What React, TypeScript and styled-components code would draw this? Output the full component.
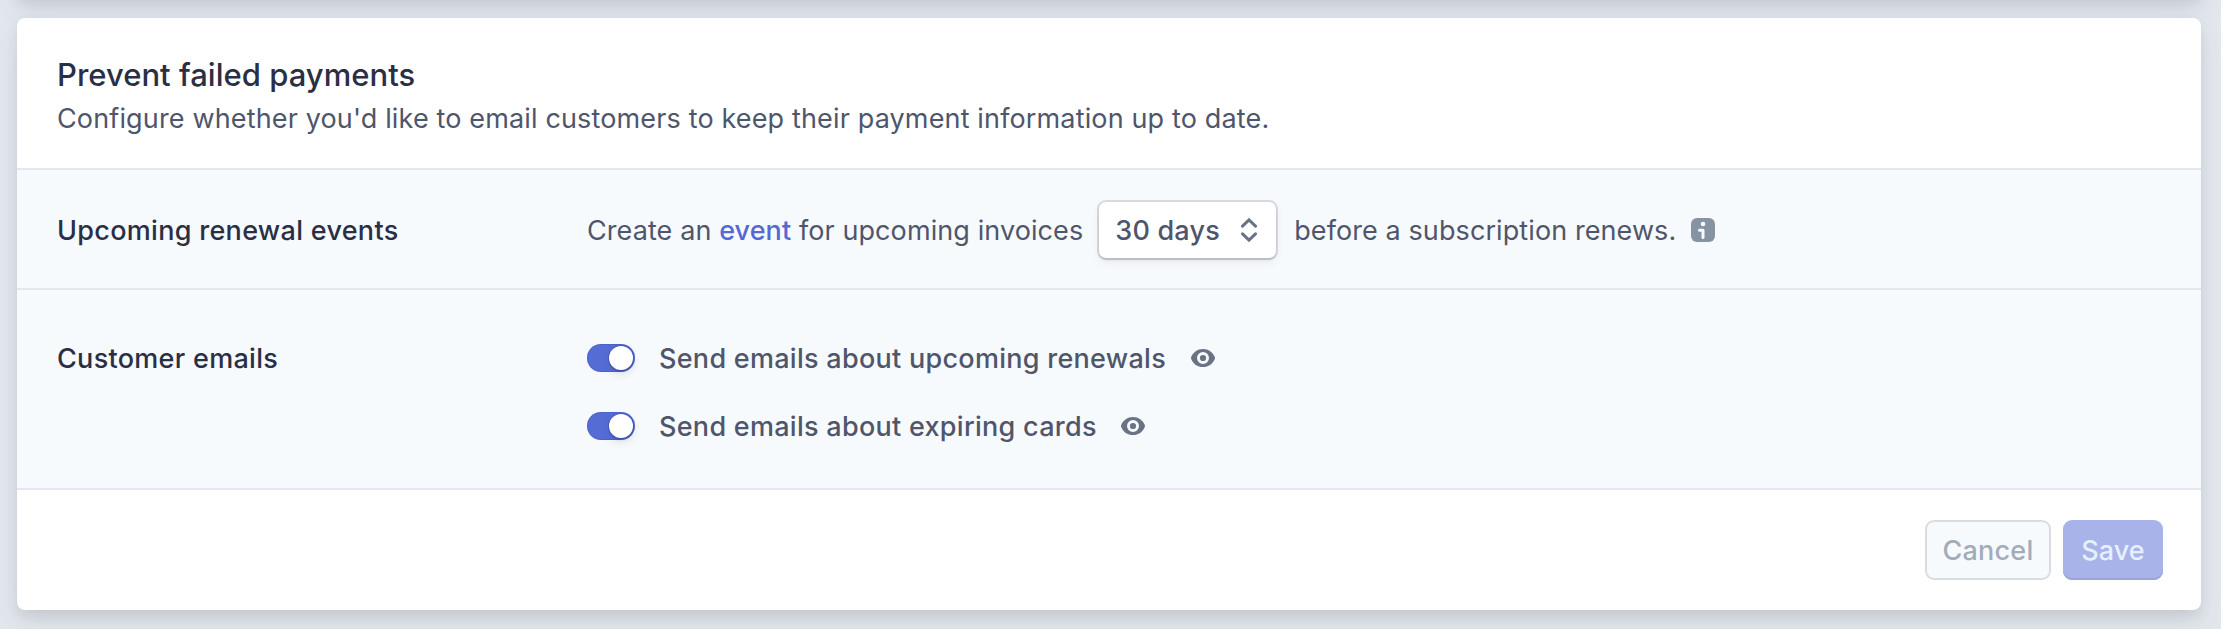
import React, { useState } from "react";
import styled, { createGlobalStyle } from "styled-components";

const GlobalStyle = createGlobalStyle`
  *, *::before, *::after { box-sizing: border-box; }
  body {
    margin: 0;
    background: #e3e8ee;
    color: #4f566b;
    font-family: Inter, "Liberation Sans", sans-serif;
    font-size: 27px;
    line-height: 40px;
  }
`;

const Page = styled.main`
  display: flex;
  flex-direction: column;
  gap: 20px;
  height: 629px;
  padding: 0 20px 0 17px;
  overflow: hidden;
`;

const Card = styled.section`
  flex: none;
  position: relative;
  border-radius: 8px;
  background: #fff;
  box-shadow: 0 14px 28px rgba(60, 66, 87, 0.1), 0 6px 12px rgba(0, 0, 0, 0.07);
`;

const PreviousCard = styled(Card)`
  height: 120px;
  margin-top: -122px;
`;

const Header = styled.header`
  height: 152px;
  padding: 37px 40px 0;
  border-bottom: 2px solid #e3e8ee;
`;

const Title = styled.h2`
  margin: 0 0 4px;
  color: #2a2f45;
  font-size: 31px;
  font-weight: 500;
  line-height: 40px;
  letter-spacing: 0.02px;
`;

const Description = styled.p`
  margin: 0;
  letter-spacing: 0.145px;
`;

const Row = styled.div<{ $pad: string }>`
  display: grid;
  grid-template-columns: 530px 1fr;
  padding: ${(p) => p.$pad};
  border-bottom: 2px solid #e3e8ee;
  background: #f7fafc;
`;

const Label = styled.h3`
  margin: 0;
  padding-top: 1px;
  color: #2a2f45;
  font-size: 27px;
  font-weight: 500;
  line-height: inherit;
  letter-spacing: 0.3px;
`;

const EventRow = styled(Row)`
  align-items: center;

  ${Label} {
    padding-top: 2px;
  }
`;

const Sentence = styled.div`
  display: flex;
  align-items: center;
  letter-spacing: 0.09px;
`;

const Phrase = styled.span`
  padding-top: 2px;
`;

const EventLink = styled.a`
  color: #5469d4;
  font-weight: 500;
  text-decoration: none;
`;

const SelectButton = styled.button`
  display: flex;
  align-items: center;
  justify-content: space-between;
  width: 177px;
  height: 56px;
  margin: 2px 18px 2px 16px;
  padding: 0 18px 0 16px;
  border: 0;
  border-radius: 7px;
  background: #fff;
  color: #4f566b;
  font: inherit;
  font-weight: 500;
  letter-spacing: 0.2px;
  box-shadow: 0 0 0 2px rgba(60, 66, 87, 0.16), 0 2px 2px rgba(0, 0, 0, 0.12),
    0 4px 10px rgba(60, 66, 87, 0.08);
`;

const InfoIcon = styled.svg`
  flex: none;
  margin-left: 15px;
`;

const Options = styled.div`
  display: flex;
  flex-direction: column;
  gap: 28px;
`;

const Option = styled.div`
  display: flex;
  align-items: center;
  height: 40px;
`;

const OptionLabel = styled.span`
  margin: 0 24.6px 0 24px;
  padding-top: 2px;
  font-weight: 500;
  letter-spacing: 0.28px;
`;

const Switch = styled.button<{ $on: boolean }>`
  display: flex;
  align-items: center;
  justify-content: ${(p) => (p.$on ? "flex-end" : "flex-start")};
  width: 48px;
  height: 28px;
  padding: 0 2px;
  border: 0;
  border-radius: 14px;
  background: ${(p) => (p.$on ? "#556cd6" : "#c1c9d2")};
  box-shadow: inset 0 0 0 1px rgba(50, 60, 150, 0.18);
`;

const Knob = styled.span`
  width: 24px;
  height: 24px;
  border-radius: 50%;
  background: #fff;
  box-shadow: 0 0 0 1px rgba(0, 0, 90, 0.14), 0 2px 2px rgba(0, 0, 0, 0.12),
    0 4px 10px rgba(60, 66, 87, 0.14);
`;

const Footer = styled.footer`
  display: flex;
  justify-content: flex-end;
  gap: 12px;
  height: 120px;
  padding: 30px 38px;
`;

const Button = styled.button<{ $primary?: boolean }>`
  width: ${(p) => (p.$primary ? 100 : 126)}px;
  height: 60px;
  padding: 2px 0 0;
  border: ${(p) => (p.$primary ? "0" : "2px solid #d9dce1")};
  border-radius: 9px;
  background: ${(p) => (p.$primary ? "#a7b3e9" : "#f7fafc")};
  box-shadow: ${(p) => (p.$primary ? "inset 0 -2px 0 #9ba6d8" : "none")};
  color: ${(p) => (p.$primary ? "#e6f0fc" : "#a3acb9")};
  font: inherit;
  font-weight: 500;
  letter-spacing: ${(p) => (p.$primary ? 0.05 : 0.2)}px;
`;

function Chevrons() {
  return (
    <svg width="18" height="24" viewBox="0 0 18 24" fill="none" stroke="#697386" strokeWidth="3" strokeLinecap="round" strokeLinejoin="miter">
      <path d="M2.5 8.2 9 1.9l6.5 6.3M2.5 15.8 9 22.1l6.5-6.3" />
    </svg>
  );
}

function Eye() {
  return (
    <svg width="24" height="18" viewBox="0 0 24 18" fill="none">
      <path fill="#697386" fillRule="evenodd" d="M12 0C6.500 0 2.200 3.200.2 8.100a2.300 2.300 0 0 0 0 1.800C2.200 14.800 6.500 18 12 18s9.800-3.200 11.800-8.100a2.300 2.300 0 0 0 0-1.800C21.800 3.200 17.500 0 12 0Zm0 3a6 6 0 1 1 0 12 6 6 0 0 1 0-12Z" />
      <circle cx="12" cy="9" r="3.1" fill="#697386" />
    </svg>
  );
}

function EmailOption({ label }: { label: string }) {
  const [on, setOn] = useState(true);
  return (
    <Option>
      <Switch $on={on} role="switch" aria-checked={on} aria-label={label} onClick={() => setOn(!on)}>
        <Knob />
      </Switch>
      <OptionLabel>{label}</OptionLabel>
      <Eye />
    </Option>
  );
}

export default function App() {
  return (
    <>
      <GlobalStyle />
      <Page>
        <PreviousCard />
        <Card>
          <Header>
            <Title>Prevent failed payments</Title>
            <Description>
              Configure whether you'd like to email customers to keep their payment information up to date.
            </Description>
          </Header>
          <EventRow $pad="30px 40px 28px">
            <Label>Upcoming renewal events</Label>
            <Sentence>
              <Phrase>
                Create an <EventLink>event</EventLink> for upcoming invoices
              </Phrase>
              <SelectButton>
                <Phrase>30 days</Phrase>
                <Chevrons />
              </SelectButton>
              <Phrase>before a subscription renews.</Phrase>
              <InfoIcon width="24" height="24" viewBox="0 0 24 24" fill="none">
                <rect width="24" height="24" rx="6" fill="#8792a2" />
                <circle cx="12" cy="6" r="2.3" fill="#f7fafc" />
                <path d="M8.500 12.200H12V19.500" stroke="#f7fafc" strokeWidth="3" strokeLinecap="round" strokeLinejoin="round" />
              </InfoIcon>
            </Sentence>
          </EventRow>
          <Row $pad="48px 40px 42px">
            <Label>Customer emails</Label>
            <Options>
              <EmailOption label="Send emails about upcoming renewals" />
              <EmailOption label="Send emails about expiring cards" />
            </Options>
          </Row>
          <Footer>
            <Button>Cancel</Button>
            <Button $primary>Save</Button>
          </Footer>
        </Card>
      </Page>
    </>
  );
}
